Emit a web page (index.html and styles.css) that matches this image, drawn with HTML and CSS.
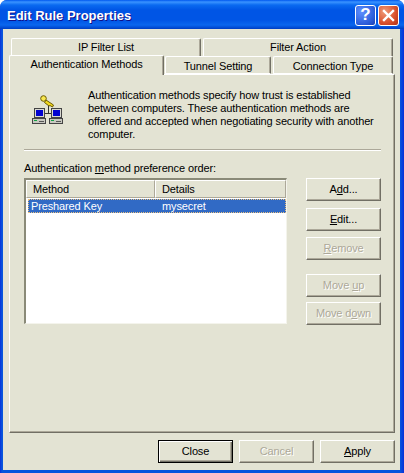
FILE: index.html
```html
<!DOCTYPE html>
<html lang="en">
<head>
  <meta charset="UTF-8">
  <meta name="viewport" content="width=device-width, initial-scale=1.0">
  <link rel="stylesheet" href="styles.css">
  <title>Edit Rule Properties</title>
</head>
<body>
  <div class="window">
    <div class="titlebar">
      <span class="title">Edit Rule Properties</span>
      <div class="caption-btn help">?</div>
      <div class="caption-btn close">
        <svg width="13" height="13" viewBox="0 0 13 13"><path d="M2 2 L11 11 M11 2 L2 11" stroke="#fff" stroke-width="2.4" stroke-linecap="square"/></svg>
      </div>
    </div>
    <div class="client">
      <div class="tabs-back">
        <div class="tab tab-back">IP Filter List</div>
        <div class="tab tab-back">Filter Action</div>
      </div>
      <div class="tabs-front">
        <div class="tab tab-active">Authentication Methods</div>
        <div class="tab tab-tunnel">Tunnel Setting</div>
        <div class="tab tab-conn">Connection Type</div>
      </div>
      <div class="panel">
        <div class="intro">
          <svg class="intro-icon" width="32" height="30" viewBox="0 0 32 30">
            <!-- links -->
            <path d="M16.5 9 V18.5 M12 18.5 H20" stroke="#333" fill="none"/>
            <!-- key -->
            <path d="M14 5 L21.5 10 L20.5 12 L18 10.5 L17 11 L12.5 7.5 Z" fill="#f0d820" stroke="#6b5a00"/>
            <circle cx="11.5" cy="3.5" r="2.8" fill="#f8e850" stroke="#6b5a00"/>
            <!-- left computer -->
            <rect x="2.5" y="13.5" width="10" height="9" fill="#d8d8d0" stroke="#444"/>
            <rect x="4" y="15" width="7" height="6" fill="#0000d0"/>
            <rect x="0.5" y="23.5" width="13" height="5" fill="#c8c8c0" stroke="#444"/>
            <rect x="2" y="25" width="3" height="1" fill="#10a040"/>
            <rect x="7" y="26" width="5" height="1" fill="#555"/>
            <!-- right computer -->
            <rect x="19.5" y="13.5" width="10" height="9" fill="#d8d8d0" stroke="#444"/>
            <rect x="21" y="15" width="7" height="6" fill="#0000d0"/>
            <rect x="17.5" y="23.5" width="13" height="5" fill="#c8c8c0" stroke="#444"/>
            <rect x="19" y="25" width="3" height="1" fill="#10a040"/>
            <rect x="24" y="26" width="5" height="1" fill="#555"/>
          </svg>
          <p class="intro-text">Authentication methods specify how trust is established between computers. These authentication methods are offered and accepted when negotiating security with another computer.</p>
        </div>
        <div class="separator"></div>
        <div class="list-label">Authentication <u>m</u>ethod preference order:</div>
        <div class="list-area">
          <div class="list">
            <div class="list-head">
              <div class="col col-method">Method</div>
              <div class="col col-details">Details</div>
            </div>
            <div class="list-row">
              <div class="cell-method">Preshared Key</div>
              <div>mysecret</div>
            </div>
          </div>
          <div class="side-buttons">
            <div class="btn">A<u>d</u>d...</div>
            <div class="btn edit"><u>E</u>dit...</div>
            <div class="btn disabled"><u>R</u>emove</div>
            <div class="btn disabled move-up">Move <u>u</u>p</div>
            <div class="btn disabled move-down">Move d<u>o</u>wn</div>
          </div>
        </div>
      </div>
      <div class="footer">
        <div class="btn default">Close</div>
        <div class="btn disabled">Cancel</div>
        <div class="btn"><u>A</u>pply</div>
      </div>
    </div>
  </div>
</body>
</html>
```

FILE: styles.css
```css
body {
    margin: 0;
    overflow: hidden;
    font-family: "Liberation Sans", Arial, sans-serif;
    font-size: 11px;
    letter-spacing: -0.13px;
    color: #000;
    background: #fff;
}

.window {
    width: 404px;
    height: 473px;
    display: flex;
    flex-direction: column;
    background: linear-gradient(to right, #0831d9 0, #0855dd 2px, #0855dd 400px, #0831d9 404px);
    border-radius: 7px 7px 0 0;
    overflow: hidden;
}

.titlebar {
    box-sizing: border-box;
    height: 29px;
    flex: none;
    display: flex;
    align-items: center;
    padding: 2px 5px 0 7px;
    gap: 2px;
    background: linear-gradient(to bottom, #0058ee 0, #3a93ff 2px, #0a6af0 5px, #0055e5 10px, #0055e5 20px, #0a66ee 25px, #0048d0 28px, #003dc0 29px);
}

.title {
    flex: 1;
    color: #fff;
    font-weight: bold;
    font-size: 13px;
    letter-spacing: 0;
    text-shadow: 1px 1px #0f1089;
}

.caption-btn {
    box-sizing: border-box;
    width: 21px;
    height: 21px;
    margin-top: -1px;
    border: 1px solid #fff;
    border-radius: 3px;
    display: flex;
    align-items: center;
    justify-content: center;
    color: #fff;
}

.help {
    background: radial-gradient(circle at 30% 30%, #5f90ff, #2a5bd8 70%, #1a3fb0);
    font-weight: bold;
    font-size: 17px;
}

.close {
    background: radial-gradient(circle at 30% 30%, #f09a78, #d8502c 60%, #b03015);
}

.client {
    flex: 1;
    margin: 0 4px 3px 3px;
    padding: 9px 5px 0 6px;
    background: #e3e3d3;
}

.tabs-back,
.tabs-front {
    display: flex;
    gap: 2px;
}

.tabs-back {
    margin: 0 2px;
    height: 18px;
}

.tabs-front {
    height: 19px;
    margin-top: -1px;
    align-items: flex-end;
    position: relative;
    z-index: 1;
}

.tab {
    box-sizing: border-box;
    text-align: center;
    background: #e3e3d3;
    border-top: 1px solid #fff;
    border-left: 1px solid #fff;
    border-right: 1px solid #716f64;
    border-radius: 2px 2px 0 0;
    box-shadow: inset -1px 0 #aca899;
    line-height: 17px;
}

.tab-back {
    flex: 1;
}

.tab-active {
    width: 155px;
    height: 20px;
    line-height: 16px;
    margin-bottom: -1px;
}

.tab-tunnel {
    width: 106px;
    height: 18px;
    line-height: 18px;
    margin-left: -1px;
    border-bottom: 1px solid #fff;
}

.tab-conn {
    width: 120px;
    height: 18px;
    line-height: 18px;
    border-bottom: 1px solid #fff;
}

.panel {
    box-sizing: border-box;
    height: 359px;
    padding: 0 13px 0 14px;
    border-top: 1px solid #fff;
    border-left: 1px solid #fff;
    border-right: 1px solid #716f64;
    border-bottom: 1px solid #716f64;
    box-shadow: inset -1px -1px #aca899;
}

.intro {
    display: flex;
    height: 74px;
}

.intro-icon {
    margin: 20px 24px 0 8px;
    flex: none;
}

.intro-text {
    margin: 14px 0 0;
    width: 292px;
    line-height: 13px;
}

.separator {
    border-top: 1px solid #aca899;
    border-bottom: 1px solid #fff;
}

.list-label {
    margin-top: 10px;
    height: 15px;
    line-height: 14px;
}

.list-area {
    display: flex;
    justify-content: space-between;
    margin-top: 2px;
}

.list {
    box-sizing: border-box;
    width: 263px;
    height: 146px;
    background: #fff;
    border-top: 2px solid #8a8a78;
    border-left: 2px solid #8a8a78;
    border-right: 1px solid #f4f4ec;
    border-bottom: 1px solid #f4f4ec;
}

.list-head {
    display: flex;
    height: 18px;
    background: #e3e3d3;
}

.col {
    box-sizing: border-box;
    padding-left: 6px;
    line-height: 16px;
    border-top: 1px solid #fff;
    border-left: 1px solid #fff;
    border-right: 1px solid #aca899;
    border-bottom: 1px solid #aca899;
}

.col-method {
    width: 129px;
}

.col-details {
    flex: 1;
}

.list-row {
    display: flex;
    box-sizing: border-box;
    height: 14px;
    margin: 1px 0 0 2px;
    line-height: 12px;
    color: #fff;
    background: #316ac5;
    border: 1px dotted #e8c080;
}

.cell-method {
    width: 131px;
    padding-left: 2px;
}

.side-buttons {
    display: flex;
    flex-direction: column;
    gap: 6px;
}

.btn {
    box-sizing: border-box;
    width: 75px;
    height: 23px;
    line-height: 20px;
    text-align: center;
    background: #e3e3d3;
    border-top: 1px solid #fff;
    border-left: 1px solid #fff;
    border-right: 1px solid #716f64;
    border-bottom: 1px solid #716f64;
    box-shadow: inset -1px -1px #aca899;
}

.edit {
    margin-top: 1px;
}

.move-up {
    margin-top: 8px;
}

.move-down {
    margin-top: -1px;
}

.disabled {
    color: #aca899;
    text-shadow: 1px 1px #fff;
}

.footer {
    display: flex;
    justify-content: flex-end;
    gap: 6px;
    margin-top: 7px;
}

.default {
    border-color: #000;
    box-shadow: inset 1px 1px #fff, inset -1px -1px #716f64, inset -2px -2px #aca899;
}
```
